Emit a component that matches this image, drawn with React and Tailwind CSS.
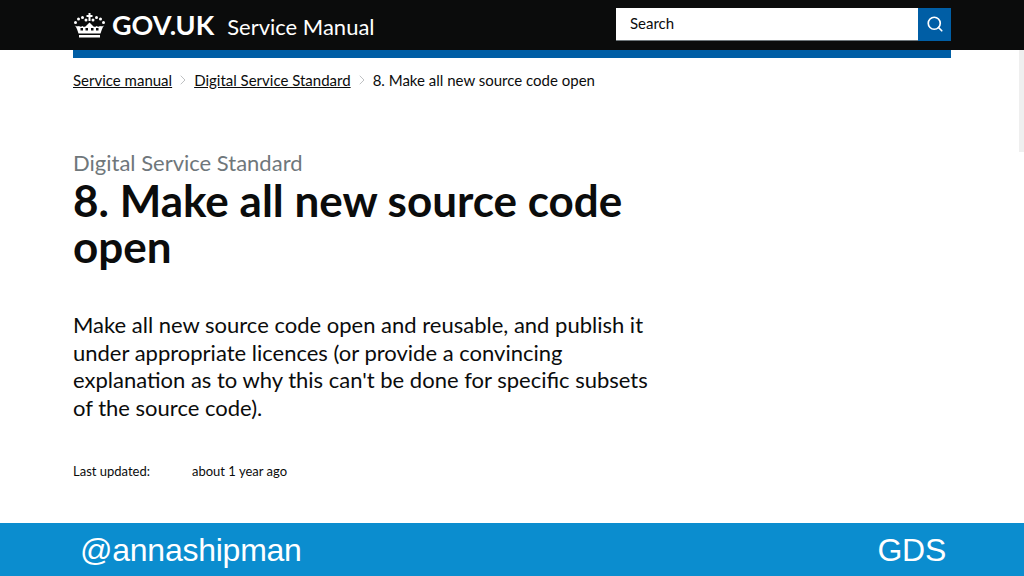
import React from "react";
import { Search, ChevronRight } from "lucide-react";

const font = "font-['Lato','Open_Sans',sans-serif]";

// crown logo, dotted like the gov.uk one
const Crown = () => (
  <svg width="33" height="25" viewBox="0 0 33 25" fill="#fff">
    <rect x="15.5" y="0" width="2" height="8" />
    <rect x="13.500" y="2" width="6" height="2" />
    <circle cx="2.500" cy="9.500" r="1.500" />
    <circle cx="5.500" cy="6" r="1.500" />
    <circle cx="9.500" cy="4.500" r="1.500" />
    <circle cx="13" cy="7" r="1.500" />
    <circle cx="20" cy="7" r="1.500" />
    <circle cx="23.500" cy="4.500" r="1.500" />
    <circle cx="27.500" cy="6" r="1.500" />
    <circle cx="30.500" cy="9.500" r="1.500" />
    <path d="M2 12.500c2 3 2.500 5 3.500 8h22c1-3 1.500-5 3.500-8-1.500 1-3 1-4 .5-1 1-2.500 1-3.500 0-1 1-2 1-3 .5l-4-4-4 4c-1 .5-2 .5-3-.5-1 1-2.500 1-3.500 0-1 .5-2.500.5-4-.5z" />
    <rect x="7.500" y="15" width="2.500" height="2.500" fill="#0b0c0c" />
    <rect x="12.500" y="15" width="2.500" height="2.500" fill="#0b0c0c" />
    <rect x="18" y="15" width="2.500" height="2.500" fill="#0b0c0c" />
    <rect x="23" y="15" width="2.500" height="2.500" fill="#0b0c0c" />
    <rect x="6" y="22" width="21" height="2.500" />
  </svg>
);

const Crumb = ({ children }) => (
  <>
    <a className="underline text-[#0b0c0c] text-[15px]">{children}</a>
    <ChevronRight size={16} strokeWidth={1.5} className="mx-[3px] text-[#bfc1c3]" />
  </>
);

export default function App() {
  return (
    <div className={`h-[576px] w-[1024px] overflow-hidden flex flex-col bg-white relative ${font}`}>
      {/* header */}
      <header className="h-[50px] bg-[#0b0c0c] pl-[73px] pr-[73px] flex items-center justify-between">
        <div className="flex items-center">
          <Crown />
          <span className="ml-[6px] text-white font-bold text-[27px]">GOV.UK</span>
          <span className="ml-[13px] mt-[3px] text-white text-[22px]">Service Manual</span>
        </div>
        <div className="flex h-[33px] mt-[-2px]">
          <div className="w-[302px] bg-white pl-[14px] text-[15px] leading-[30px] text-[#0b0c0c] border-b border-[#6f777b]">Search</div>
          <div className="w-[33px] bg-[#005ea5] flex items-center justify-center">
            <Search size={18} strokeWidth={2.25} className="text-white" />
          </div>
        </div>
      </header>
      <div className="mx-[73px] h-[8px] bg-[#005ea5]" />

      <main className="flex-1 pl-[73px]">
        {/* breadcrumb */}
        <nav className="flex items-center mt-[12px] h-[20px]">
          <Crumb>Service manual</Crumb>
          <Crumb>Digital Service Standard</Crumb>
          <span className="text-[15px] text-[#0b0c0c]">8. Make all new source code open</span>
        </nav>

        <p className="mt-[61px] text-[22px] leading-[24px] text-[#6f777b]">Digital Service Standard</p>
        <h1 className="mt-[2px] w-[600px] text-[44px] leading-[46px] font-bold text-[#0b0c0c]">
          8. Make all new source code open
        </h1>

        <p className="mt-[42px] w-[575px] text-[22px] leading-[27.500px] text-[#0b0c0c]">
          Make all new source code open and reusable, and publish it under appropriate licences (or provide a convincing explanation as to why this can't be done for specific subsets of the source code).
        </p>

        <div className="mt-[41px] flex text-[13px] text-[#0b0c0c]">
          <span className="w-[119px]">Last updated:</span>
          <span>about 1 year ago</span>
        </div>
      </main>

      {/* slide footer */}
      <footer className="h-[53px] bg-[#0b8dcf] pl-[80px] pr-[78px] flex items-center justify-between text-white text-[32px] tracking-[-0.25px] font-['Liberation_Sans',sans-serif]">
        <span>@annashipman</span>
        <span>GDS</span>
      </footer>

      {/* scrollbar thumb */}
      <div className="absolute right-0 top-[50px] w-[5px] h-[102px] bg-[#efefef]" />
    </div>
  );
}
